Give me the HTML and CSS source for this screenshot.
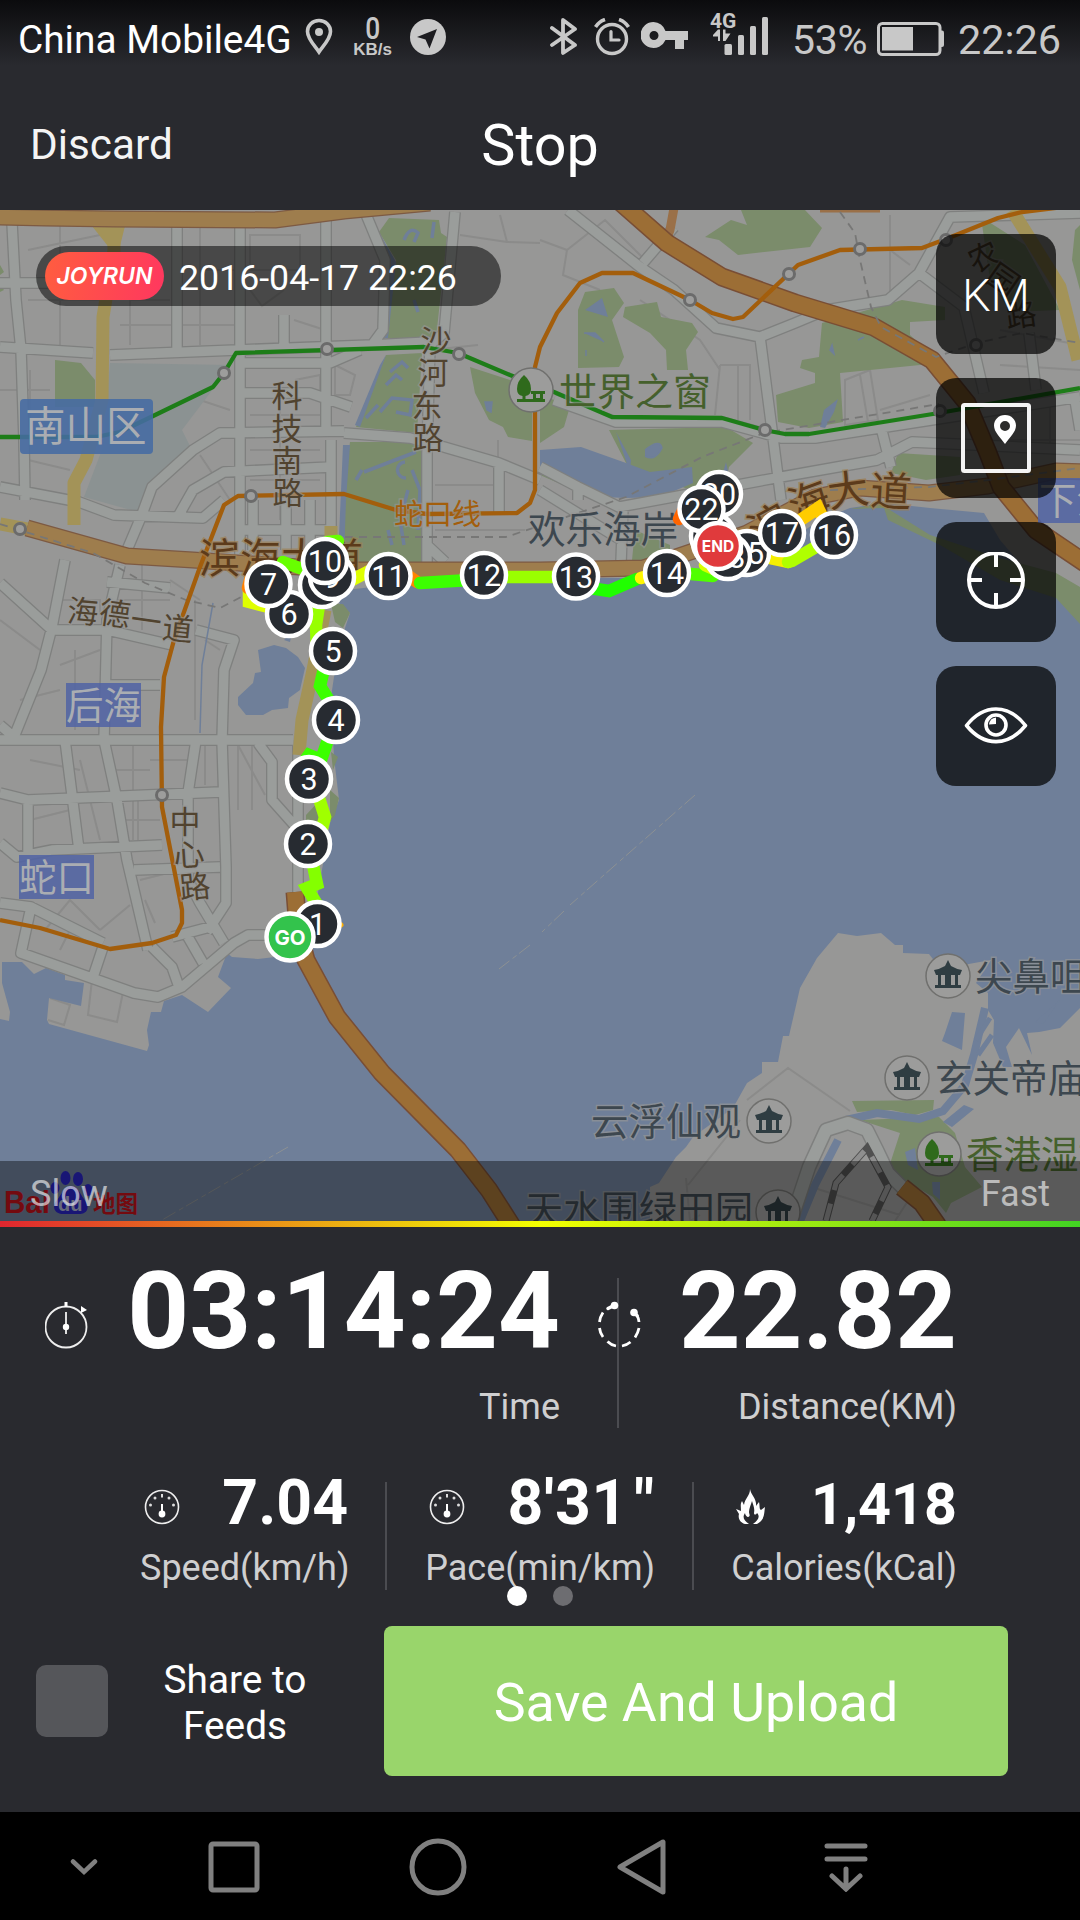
FILE: index.html
```html
<!DOCTYPE html>
<html lang="en">
<head>
<meta charset="utf-8">
<title>Joyrun</title>
<link rel="stylesheet" href="styles.css">
</head>
<body>
<div class="screen">
  <div class="statusbar">
    <span class="carrier">China Mobile4G</span>
    <svg class="st-pin" width="28" height="38" viewBox="0 0 28 38"><path d="M14 2.5C7.400 2.500 2.500 7.500 2.500 13.500C2.500 21 10 28 14 34C18 28 25.500 21 25.500 13.500C25.500 7.500 20.600 2.500 14 2.500Z" fill="none" stroke="#c8c8c8" stroke-width="3.600"/><circle cx="14" cy="14" r="4" fill="#c8c8c8"/></svg>
    <span class="netspeed"><b>0</b><i>KB/s</i></span>
    <svg class="st-nav" width="36" height="36" viewBox="0 0 36 36"><circle cx="18" cy="18" r="18" fill="#c8c8c8"/><path d="M27 10L7 18L15.500 20.500L19.500 29.500Z" fill="#1c1c20"/></svg>
    <span class="grow"></span>
    <svg class="st-bt" width="28" height="40" viewBox="0 0 28 40"><path d="M2 11L25 28L13 36V3L25 12L2 28" fill="none" stroke="#c8c8c8" stroke-width="3.800" stroke-linejoin="round" stroke-linecap="round"/></svg>
    <svg class="st-alarm" width="36" height="38" viewBox="0 0 36 38"><g fill="none" stroke="#c8c8c8"><circle cx="18" cy="21" r="14.500" stroke-width="3.400"/><path d="M17 13.500V22H25" stroke-width="3.200" stroke-linecap="round"/><path d="M1.500 9Q5 3.500 11 1.500M34.500 9Q31 3.500 25 1.500" stroke-width="3.600"/></g></svg>
    <svg class="st-key" width="48" height="28" viewBox="0 0 48 28"><path fill-rule="evenodd" fill="#c8c8c8" d="M12.500 0a13 13 0 1 0 12 18H34V27H43V18H47V9H24.500A13 13 0 0 0 12.500 0ZM13 9a4.500 4.500 0 1 1 0 9a4.500 4.500 0 0 1 0-9Z"/></svg>
    <svg class="st-signal" width="60" height="46" viewBox="0 0 60 46"><text x="0" y="16.500" class="sig-label">4G</text><g fill="#c8c8c8"><rect x="14.500" y="33" width="7.500" height="11" rx="1.500"/><rect x="28" y="24" width="6" height="20" rx="1.500"/><rect x="40" y="15" width="6" height="29" rx="1.500"/><rect x="52" y="6" width="6" height="38" rx="1.500"/><path d="M3 24L8 18.500H10V30H8V25.500H3ZM13 18.500H15.500V22.500H20.500L15.500 30H13Z"/></g></svg>
    <span class="battery-pct">53%</span>
    <svg class="st-batt" width="68" height="34" viewBox="0 0 68 34"><rect x="1.500" y="1.500" width="61.500" height="31" rx="4" fill="none" stroke="#c8c8c8" stroke-width="3"/><rect x="5" y="5" width="31" height="23.500" fill="#c8c8c8"/><path d="M64 8.500h1a2 2 0 0 1 2 2v12.500a2 2 0 0 1-2 2h-1z" fill="#c8c8c8"/></svg>
    <span class="clock">22:26</span>
  </div>
  <header class="titlebar">
    <span class="discard">Discard</span>
    <h1>Stop</h1>
  </header>

  <main class="map">
    <svg class="map-canvas" viewBox="0 210 1080 1011" width="1080" height="1011">
      <defs>
        <path id="roads" d="M12 223L16 300L21 350L24 440L25 500M0 347L93 353M110 355L237 350L372 345L430 342M0 283H103M177 225V350M240 225V560M284 315V350M326 220V435M365 212L385 260L383 330L372 345M455 212L444 333L430 345L427 453V562M344 433L410 438L444 447L499 463L540 480M127 550L141 517L152 487L193 450L220 433L344 431M176 520L193 490L224 472L331 467M0 487L79 502L114 515L203 518L224 500M241 393H310L351 407M241 363H330L360 350M241 530H331M253 500V550M286 500V550M310 500V550M331 440V530M499 463V512M427 545L445 562M0 740H293M0 725L14 737L41 670L52 627L65 560M0 583L52 630H107L172 645M196 630L234 640L224 670L222 740L226 867V903L207 932M120 565L107 620L104 740L117 800L127 860L148 950M107 582L170 588M107 685H160M65 740L79 850M0 793L28 800L220 792M28 800V853M0 843L17 857L52 850L162 845M196 740L188 793V880L200 903L224 943M134 870L220 867M0 903L31 907L21 953L134 993L158 997L182 987L234 943L248 935H285M31 907L103 943M103 947L93 977M152 947L172 967L179 987M188 937L203 963M172 937L210 927M258 743L272 762V800L296 827M298 740V893M568 210L640 267L674 290L716 328L760 337L795 323L826 310L888 300L919 273L950 217L1080 213M643 263L674 227M760 337L772 430L781 500M554 400L616 422H722L781 438H815L1080 397M540 467L578 487L619 507L781 477L877 460L912 442L1080 450M881 427L891 467M919 273L964 307L984 393M1029 333L1036 390M623 507L621 563M578 487V500M540 490L621 540M1075 400L1080 430"/>
        <g id="temple"><circle r="22" fill="#9c9c9b" stroke="#70706e" stroke-width="1.500"/><path fill="#2f3d42" d="M0-16L3-10Q8-7 14-6L12-1H-12L-14-6Q-8-7-3-10ZM-10-1H-7V9H-3V-1H3V9H7V-1H10V9H13V12H-13V9H-10Z"/></g>
        <g id="park"><circle r="22" fill="#9c9c9b" stroke="#70706e" stroke-width="1.500"/><path fill="#2f6a1c" d="M-7-15Q0-9 0-1Q0 5-5.500 6V9H2V4H0V1H14V4H12V9H14V12H-14V9H-8.500V6Q-14 5-14-1Q-14-9-7-15ZM5 4V8H9V4Z"/></g>
      </defs>
      <rect y="210" width="1080" height="1011" fill="#979796"/>
      <g class="lots"><path d="M28 250L100 235M60 225V345M28 300H100M130 300H170M120 325H235M130 300V345M200 225V345M200 270H235M250 235H300V270H250ZM250 290L262 306L284 290M294 320L325 330M250 365L280 360M295 380L320 375V395M335 365L355 375L350 395H335V365M0 390H50M30 370V430M28 460L70 470M120 465L140 450M200 400L230 410M250 415H320M280 400V520M250 450H320M250 480H320M200 455L230 500M435 485H500M430 350L478 345M460 235L507 242L540 243M507 242L500 215M435 530H525M498 440V470M540 240L567 250L563 275L600 290M567 250L605 220L645 260M890 215V300M850 250H890L910 265M720 365H750V420M720 365L715 415M738 365V420M845 380L870 370L878 420L845 425ZM860 375L868 422M880 410L930 395M640 300L700 340L720 370M1000 330L1080 345M1000 365L1080 370M1000 440H1080M1050 400V450M0 620L40 650M60 600H100V615M60 665L100 650M75 650V730M20 700L60 690M30 760L80 770M115 770H150M133 745V840M80 760L100 840M150 760H188M205 745V785M238 745V810M252 745V810M238 745L265 795M30 820L70 810M120 820H160M138 800V845M40 870L75 860M45 930L70 900L100 930M70 930L60 950M100 930L130 905M140 880L180 870M145 900L155 923M92 980L88 1015L117 1022L123 992M170 580L200 600M195 600V720M205 640L220 650M110 600H170M142 560V630M50 998L70 1005L64 1025L48 1020M747 1100L788 1068L850 1111M688 1185L740 1120M686 1178L690 1221L700 1215M805 1185L900 1215M895 1221L915 1190"/></g>
      <path fill="#8b9292" d="M110 363L231 365L207 397L182 430L192 450L152 487L138 512L84 497L103 447Z"/>
      <g fill="#7b8c6b">
        <path d="M389 218L439 220L441 233L447 237L436 338H387L396 260L379 232ZM386 355L422 353L417 433L356 427ZM350 442H424L422 562H342L345 480ZM55 360L81 363L95 380V407H55ZM470 367L510 380L532 413V441L508 437L503 427L489 420L475 393ZM0 265L4 272L0 275ZM0 285L4 290L0 292Z"/>
        <path d="M705 237L731 220L747 225L741 210H805L822 228L810 247L738 255L719 240ZM585 292L614 288L624 303L612 320L624 357L619 367L578 368V310ZM625 307L657 302L661 317L692 323L698 332L686 350L688 370H667L666 350L650 333L623 317ZM822 323L902 300L945 307V320L910 322V335L940 363L840 373L843 422L809 428L778 422L776 395L815 383V373L800 368L802 360L819 357ZM609 430L726 427L753 443L729 467L726 483L690 490L640 470L626 463ZM540 397L571 403L564 427L540 443ZM898 453L960 457V475L926 480L891 473ZM981 217L1025 245L1060 310L1010 312L990 280ZM1075 230L1080 225V290L1072 260ZM540 465L575 482L610 495L590 497L540 475ZM635 530L670 545V560H632Z"/>
        <path d="M852 1101L934 1100L933 1110L915 1115L891 1110L857 1112ZM860 1120L939 1117L955 1133L965 1167L982 1187L951 1203L946 1213L933 1197L888 1170L900 1133Z"/>
      </g>
      <path fill="#6f7f99" d="M410 583L540 578H690L720 568L760 560L790 540L820 520L850 508L884 503L930 508L984 513L1000 540L1030 575L1056 597L1080 603V1008L1060 1028L1039 1032L1027 1033L1032 1055L1019 1028L1006 1047L1012 1067H1003L993 1043L994 1020L988 1010V993L976 983L991 960L963 965L936 963L929 954L903 953V945H895L881 933L857 936L838 933L817 958L800 988L789 1036H783L778 1062H762V1073L747 1083L733 1108L693 1137L686 1147L676 1157L659 1183L650 1187V1221H0V1019L9 1021L10 1012L2 983V962H22L34 974L46 968L65 975V980L84 983L81 1006L49 998L47 1020L49 1024L147 1051L149 1045L147 1030L151 1012H161L164 1001L182 995L208 1012L231 988L218 977L227 953L232 957L258 959L275 957L310 955L318 893L330 823L339 800L334 757L331 697L334 677L345 628L350 613L339 603L345 590Z"/>
      <g fill="#6f7f99">
        <path d="M258 650L274 645L286 648L298 657L305 668L300 690L289 698L288 708L272 710L263 715H246L238 705V697L253 683L255 673L261 672ZM284 640L292 632L290 642ZM540 450L581 447L626 463L650 472L692 467L693 483L660 497L626 498L602 497L540 468ZM585 310L602 298L608 317ZM820 427L824 410L838 399L834 412L825 428ZM616 432L631 460L630 473L624 455ZM343 445H350L346 500L344 560H338ZM386 355L360 427L355 425L380 365ZM379 232L396 262L388 338H384L390 262ZM720 483L726 462L730 480L722 490ZM945 1033L952 1012L965 1013L962 1050L942 1041ZM943 1122L964 1105L974 1109L952 1127ZM905 1152L915 1148L918 1170L908 1165ZM1060 1000L1035 1022L1043 1024ZM932 1182H940V1200L933 1194Z"/>
        <path d="M404 240Q410 225 418 233L414 242M434 222L432 238M414 300L418 312M386 385L396 375L402 380M390 372L402 362L408 368M380 412L392 398L412 400L410 415L396 412M366 418L378 405M364 472L395 460L416 452M405 462A8 8 0 1 0 406 478M408 490L400 520L404 545M412 470L420 490L418 530M356 480L362 470M388 530L392 545" fill="none" stroke="#6f7f99" stroke-width="3.500"/>
        <path d="M485 402L492 402L491 412L487 410ZM830 350L832 345L834 354ZM858 340L864 337ZM584 333H595L604 342M586 350V356M645 450Q660 438 662 448Q655 462 645 456" stroke="#6f7f99" stroke-width="1.500"/>
      </g>
      <path d="M846 1120L877 1113L919 1119L943 1111L965 1085L974 1055L985 1008M800 1221L815 1185L838 1140" fill="none" stroke="#6f7f99" stroke-width="8"/>
      <path d="M978 1055L992 1035M976 1040L990 1018" fill="none" stroke="#6f7f99" stroke-width="5"/>
      <path fill="#7b8c6b" d="M850 509L884 503L890 510L930 535L1000 558L1056 573L1080 587V624L1056 598L1000 580L940 545L888 520L884 508ZM331 604L343 604L350 613L343 628L335 622ZM331 752L338 757L333 770ZM330 790L339 798L335 815L330 822ZM306 815L320 800V828H306Z"/>
      <use href="#roads" class="road-edge"/><use href="#roads" class="road-face"/>
      <path class="road-edge wide" d="M791 1221L809 1167L826 1130L848 1123L867 1130L877 1150L888 1173L908 1193"/><path class="road-face wide2" d="M791 1221L809 1167L826 1130L848 1123L867 1130L877 1150L888 1173L908 1193"/>
      <path d="M826 1221L836 1183L867 1148L888 1187L872 1221" fill="none" stroke="#505050" stroke-width="7"/><path d="M826 1221L836 1183L867 1148L888 1187L872 1221" fill="none" stroke="#8e8e8e" stroke-width="5" stroke-dasharray="18 14"/>
      <path d="M213 603L202 665L200 733" fill="none" stroke="#6f7f99" stroke-width="1.500"/>
      <g fill="none" stroke-linejoin="round">
        <path d="M114 228V250L103 317L102 400L86 460L74 483V525" stroke="#a39358" stroke-width="13"/>
        <path d="M92 226H125L119 250H111Z" fill="#a39358"/>
        <path d="M325 610L313 670L302 720L299 755M331 526V550M1012 210L1060 287L1078 360M0 524L27 529" stroke="#a39358" stroke-width="13"/>
        <path d="M-5 217L45 218L114 219L275 220L344 211L430 203M27 528L127 556L193 560L344 570H540L643 568L747 533L815 497L860 488L929 493L988 486L1056 471L1085 472" stroke="#7d5a43" stroke-width="17"/>
        <path d="M-5 217L45 218L114 219L275 220L344 211L430 203M27 528L127 556L193 560L344 570H540L643 568L747 533L815 497L860 488L929 493L988 486L1056 471L1085 472" stroke="#9e7d4d" stroke-width="14.500"/>
        <path d="M674 208L670 230L664 245M820 208H880" stroke="#9a7048" stroke-width="9"/>
        <path d="M618 200L667 243L722 277L795 303L874 327L932 360L967 403L988 453L1001 487L1036 530L1085 563M295 892L298 930L306 960L337 1017L382 1073L458 1150L489 1190L512 1226M902 1187L922 1203L938 1226" stroke="#794e35" stroke-width="19"/>
        <path d="M618 200L667 243L722 277L795 303L874 327L932 360L967 403L988 453L1001 487L1036 530L1085 563M295 892L298 930L306 960L337 1017L382 1073L458 1150L489 1190L512 1226M902 1187L922 1203L938 1226" stroke="#9c6e35" stroke-width="16"/>
        <path d="M840 212L855 233L860 260L871 307L881 327L936 357L977 343L1022 333L1080 343M331 537H506L626 497L702 457L764 433L939 404M0 524L93 553L145 583L186 600L220 608L241 597M830 490L929 487L988 480L1080 468" stroke="#777776" stroke-width="1.800" stroke-dasharray="8 6"/>
        <path d="M695 795L621 860L570 905M564 911L542 932M530 945L499 969M288 1147L162 1220" stroke="#8d9193" stroke-width="1" stroke-dasharray="14 3 5 4"/>
        <path d="M0 437H96L120 432L213 387L224 373L236 353L424 347L458 353L510 375L554 392L612 417L722 418L764 430L785 434H809L939 413L1080 388" stroke="#1d7d18" stroke-width="4.300"/>
        <path d="M0 920L40 928L110 949L152 943L176 935L182 923V910L162 807L161 727L164 677L174 640L200 567L224 505L238 496L344 494L396 510L427 514L517 513L530 503L535 490V367L540 347L557 313L580 283L602 273H633L690 300L712 313L733 319L743 317L798 265L840 250L922 248L946 239L998 218L1022 212L1080 205" stroke="#a35e0c" stroke-width="4.300"/>
      </g>
      <g class="station"><circle cx="224" cy="373" r="5.500"/><circle cx="327" cy="349" r="5.500"/><circle cx="459" cy="354" r="5.500"/><circle cx="251" cy="496" r="5.500"/><circle cx="20" cy="529" r="5.500"/><circle cx="162" cy="795" r="5.500"/><circle cx="690" cy="300" r="5.500"/><circle cx="789" cy="274" r="5.500"/><circle cx="860" cy="249" r="5.500"/><circle cx="946" cy="240" r="5.500"/><circle cx="765" cy="430" r="5.500"/><circle cx="976" cy="345" r="5.500"/><circle cx="940" cy="411" r="5.500"/></g>

      <rect x="20" y="399" width="133" height="55" rx="4" fill="#456ba3" fill-opacity=".88"/>
      <text class="area" x="25" y="441" font-size="40.500">南山区</text>
      <g fill="#5063a5" fill-opacity=".85"><rect x="66" y="683" width="75" height="44"/><rect x="19" y="855" width="75" height="44"/><rect x="1038" y="478" width="42" height="45"/></g>
      <g class="area" font-size="37.500"><text x="66" y="719">后海</text><text x="19" y="891">蛇口</text><text x="1039" y="514">下沙</text></g>
      <g class="street" font-size="31">
        <text x="287" y="407">科</text><text x="287" y="440">技</text><text x="287" y="472">南</text><text x="288" y="504">路</text>
        <text x="436" y="352">沙</text><text x="433" y="384">河</text><text x="427" y="417">东</text><text x="428" y="449">路</text>
        <text x="83" y="623" transform="rotate(5 83 612)">海</text><text x="115" y="625" transform="rotate(8 115 613)">德</text><text x="146" y="632" transform="rotate(8 146 622)">一</text><text x="178" y="640" transform="rotate(6 178 628)">道</text>
        <text x="185" y="833">中</text><text x="189" y="866" transform="rotate(-4 189 855)">心</text><text x="195" y="898" transform="rotate(-5 195 887)">路</text>
        <text x="984" y="268" transform="rotate(-25 984 257)">农</text><text x="1003" y="291" transform="rotate(35 1003 280)">园</text><text x="1021" y="326" transform="rotate(-8 1021 315)">路</text>
      </g>
      <text class="metro" x="394" y="525" font-size="29">蛇口线</text>
      <g class="avenue" font-size="41"><text x="281" y="573">滨海大道</text>
        <text x="769" y="540" transform="rotate(-28 769 525)">滨</text><text x="809" y="516" transform="rotate(-20 809 501)">海</text><text x="848" y="505" transform="rotate(-8 848 490)">大</text><text x="891" y="506" transform="rotate(3 891 491)">道</text></g>
      <g class="poi" font-size="37.500"><text x="528" y="543">欢乐海岸</text><text x="591" y="1135">云浮仙观</text><text x="935" y="1092">玄关帝庙</text><text x="975" y="990">尖鼻咀</text><text x="525" y="1223" font-size="38">天水围绿田园</text></g>
      <g class="poi green" font-size="38"><text x="559" y="405">世界之窗</text><text x="966" y="1168" font-size="37.500">香港湿地</text></g>
      <use href="#temple" x="769" y="1121"/><use href="#temple" x="907" y="1078"/><use href="#temple" x="948" y="976"/><use href="#temple" x="778" y="1212"/>
      <use href="#park" x="939" y="1154"/><use href="#park" x="531" y="390"/>

      <g class="baidu"><text x="4" y="1213" fill="#c1121a" font-size="31" textLength="46" lengthAdjust="spacingAndGlyphs">Bai</text><text x="93" y="1212" fill="#c1121a" font-size="22.500">地图</text>
        <g fill="#2a26c4"><ellipse cx="65.500" cy="1178" rx="5" ry="7"/><ellipse cx="78" cy="1179" rx="5" ry="7"/><ellipse cx="55" cy="1188" rx="4.500" ry="6"/><ellipse cx="88" cy="1190" rx="4.500" ry="6"/><path d="M71 1186C78 1186 80 1194 84 1199C91 1208 87 1214 79 1214H63C55 1214 51 1207 57 1200C62 1194 64 1186 71 1186Z"/></g><text x="58" y="1211" fill="#b0b4d0" font-size="20">du</text></g>

      <g class="route">
        <path stroke="#ffb000" d="M335 929L341 925" stroke-width="5"/>
        <path stroke="#84ff00" d="M317 915L318 906L307 888L317 884L312 860L309 850"/>
        <path stroke="#a0ff00" d="M322 838L321 832L325 817L318 795L309 785"/>
        <path stroke="#3cff00" d="M304 762L309 755L321 760L333 725M335 710L320 686L326 660"/>
        <path stroke="#98ff00" d="M317 650L316 625L318 612L300 612"/>
        <path stroke="#dfff00" d="M280 610L249 602V590"/><path stroke="#ff8000" d="M248 588L250 580"/>
        <path stroke="#68ff00" d="M283 562L305 570M327 542L338 541"/>
        <path stroke="#dfff00" d="M352 580L375 568"/><path stroke="#ff8400" d="M410 577L417 582"/>
        <path stroke="#3cff00" d="M420 583L470 580"/><path stroke="#9aff00" d="M490 577H570"/>
        <path stroke="#20ff00" d="M590 588L609 591L637 579"/><path stroke="#fff600" d="M641 578L658 573"/>
        <path stroke="#50ff00" d="M680 573L713 576"/><path stroke="#d8ff00" d="M705 565L725 574"/>
        <path stroke="#f5ee00" d="M760 556L788 562"/><path stroke="#b0ff00" d="M788 562L792 561L826 541"/>
        <path stroke="#ffcc00" d="M793 525L818 508L824 520"/><path stroke="#ff6500" d="M679 519L683 511"/>
      </g>
      <g class="marks">
        <g transform="translate(317.500 924)"><circle r="22"/><text y="11">1</text></g><g transform="translate(308 844)"><circle r="22"/><text y="11">2</text></g><g transform="translate(309 779)"><circle r="22"/><text y="11">3</text></g><g transform="translate(336 720)"><circle r="22"/><text y="11">4</text></g><g transform="translate(333 651)"><circle r="22"/><text y="11">5</text></g><g transform="translate(289 614)"><circle r="22"/><text y="11">6</text></g><g transform="translate(268.500 584)"><circle r="22"/><text y="11">7</text></g><g transform="translate(322 585)"><circle r="22"/><text y="11">8</text></g><g transform="translate(332 577)"><circle r="22"/><text y="11">9</text></g><g transform="translate(325 561)"><circle r="22"/><text y="11">10</text></g><g transform="translate(388.500 576)"><circle r="22"/><text y="11">11</text></g><g transform="translate(484 575)"><circle r="22"/><text y="11">12</text></g><g transform="translate(576 576.500)"><circle r="22"/><text y="11">13</text></g><g transform="translate(667 573)"><circle r="22"/><text y="11">14</text></g><g transform="translate(747 553)"><circle r="22"/><text y="11">15</text></g><g transform="translate(834 535)"><circle r="22"/><text y="11">16</text></g><g transform="translate(782 533)"><circle r="22"/><text y="11">17</text></g><g transform="translate(728 557)"><circle r="22"/><text y="11">18</text></g><g transform="translate(715 543)"><circle r="22"/><text y="11">19</text></g><g transform="translate(719 494)"><circle r="22"/><text y="11">20</text></g><g transform="translate(713 536)"><circle r="22"/><text y="11">21</text></g><g transform="translate(701.500 509)"><circle r="22"/><text y="11">22</text></g>
        <g class="end" transform="translate(718 546)"><circle r="23"/><text y="6">END</text></g>
        <g class="go" transform="translate(290 937)"><circle r="23.500"/><text y="8">GO</text></g>
      </g>
    </svg>
    <div class="stamp"><span class="brand">JOYRUN</span><span class="date">2016-04-17 22:26</span></div>
    <div class="tools">
      <button class="tool km">KM</button>
      <button class="tool"><svg width="70" height="70" viewBox="0 0 70 70"><rect x="2" y="2" width="66" height="66" rx="1.500" fill="none" stroke="#f4f4f4" stroke-width="4"/><path fill="#fff" fill-rule="evenodd" d="M44 12C37.500 12 33 17 33 22.500C33 29 39 34 44 41C49 34 55 29 55 22.500C55 17 50.500 12 44 12ZM44 18a5 5 0 1 1 0 10a5 5 0 0 1 0-10Z"/></svg></button>
      <button class="tool"><svg width="60" height="60" viewBox="0 0 60 60" fill="none" stroke="#fff" stroke-width="4"><circle cx="30" cy="28" r="27"/><path d="M30 2V15M30 41V55M2 28H16M44 28H58"/></svg></button>
      <button class="tool"><svg width="64" height="40" viewBox="0 0 64 40" fill="none" stroke="#fff" stroke-width="3.600"><path d="M2.500 19.500C20-2.500 44-2.500 61.500 19.500C44 41 20 41 2.500 19.500Z" stroke-linejoin="round"/><circle cx="32" cy="19" r="10"/><path d="M32 11.500A8 8 0 0 0 25 18.500L32 18Z" fill="#fff" stroke="none"/></svg></button>
    </div>
    <div class="scale"><span>Slow</span><span>Fast</span></div>
  </main>
  <div class="spectrum"></div>

  <section class="stats">
    <div class="row major">
      <div class="metric time">
        <div class="line"><svg width="44" height="48" viewBox="0 0 44 48"><circle cx="21" cy="26" r="20.500" fill="none" stroke="#eee" stroke-width="1.800"/><path d="M19.500 1h3v5h-3z" fill="#fff"/><path d="M36 5L42 9L36 12Z" fill="#fff"/><path d="M21 11V33" stroke="#ddd" stroke-width="2"/><circle cx="21" cy="26" r="3.200" fill="#fff"/></svg><strong>03:14:24</strong></div>
        <span class="label">Time</span>
      </div>
      <div class="rule"></div>
      <div class="metric distance">
        <div class="line"><svg width="44" height="48" viewBox="0 0 44 48" fill="none" stroke="#fff" stroke-width="2.800"><path d="M40 14.500Q42 18 42 21M42 27Q41 32 38 36.500M33.500 41Q30 44 25 45M19 45Q14 44 10.500 40.500M6 36Q3 32 2.500 27M2.500 21Q3 16 6 11.500"/><path d="M11 7.500L16 5M36 11L40 14.500" stroke-width="3.500" stroke-linecap="round"/><circle cx="17.500" cy="4.500" r="3.800" fill="#fff" stroke="none"/><circle cx="37" cy="11.500" r="3.800" fill="#fff" stroke="none"/></svg><strong>22.82</strong></div>
        <span class="label">Distance(KM)</span>
      </div>
    </div>
    <div class="row minor">
      <div class="metric speed">
        <div class="line"><svg width="36" height="36" viewBox="0 0 36 36"><circle cx="18" cy="18" r="16.500" fill="none" stroke="#eee" stroke-width="1.600"/><path d="M18 15V25" stroke="#fff" stroke-width="2"/><circle cx="18" cy="25" r="3.400" fill="#fff"/><g fill="#ddd"><circle cx="6.500" cy="16" r="1.500"/><circle cx="11" cy="9" r="1.500"/><rect x="17" y="5" width="2" height="3.500"/><circle cx="25" cy="9" r="1.500"/><circle cx="29.500" cy="16" r="1.500"/></g></svg><strong>7.04</strong></div>
        <span class="label">Speed(km/h)</span>
      </div>
      <div class="rule"></div>
      <div class="metric pace">
        <div class="line"><svg width="36" height="36" viewBox="0 0 36 36"><circle cx="18" cy="18" r="16.500" fill="none" stroke="#eee" stroke-width="1.600"/><path d="M18 15V25" stroke="#fff" stroke-width="2"/><circle cx="18" cy="25" r="3.400" fill="#fff"/><g fill="#ddd"><circle cx="6.500" cy="16" r="1.500"/><circle cx="11" cy="9" r="1.500"/><rect x="17" y="5" width="2" height="3.500"/><circle cx="25" cy="9" r="1.500"/><circle cx="29.500" cy="16" r="1.500"/></g></svg><strong>8'31<em>"</em></strong></div>
        <span class="label">Pace(min/km)</span>
      </div>
      <div class="rule"></div>
      <div class="metric calories">
        <div class="line"><svg width="30" height="36" viewBox="0 0 30 36"><path fill="#fff" d="M14 0C15 6 21 10 20 17L23 13C24 17 23 20 25 21L29 18C28 24 29 31 21 35H17C23 31 24 27 21 24C20 26 18 26 18 24C19 19 17 16 16 12C15 16 13 19 13 23C13 25 15 27 12 28C11 28 9 26 9 24C6 28 8 32 13 35H9C3 33 2 28 3 25L0 20L5 22C5 18 4 15 6 12L8 16C9 9 14 7 14 0Z"/></svg><strong>1,418</strong></div>
        <span class="label">Calories(kCal)</span>
      </div>
    </div>
    <div class="dots"><i class="on"></i><i></i></div>
    <div class="actions">
      <span class="check"></span>
      <span class="share">Share to<br>Feeds</span>
      <button class="save">Save And Upload</button>
    </div>
  </section>

  <nav class="navbar">
    <span class="hide"><svg width="28" height="20" viewBox="0 0 28 20"><path d="M3 4.500L14 15L25 4.500" fill="none" stroke="#808080" stroke-width="4.500" stroke-linecap="round"/></svg></span>
    <span><svg width="52" height="52" viewBox="0 0 52 52"><rect x="3" y="3" width="46" height="46" rx="2" fill="none" stroke="#808080" stroke-width="5"/></svg></span>
    <span><svg width="58" height="58" viewBox="0 0 58 58"><circle cx="29" cy="29" r="26" fill="none" stroke="#808080" stroke-width="5"/></svg></span>
    <span><svg width="50" height="56" viewBox="0 0 50 56"><path d="M46 3V53L3 28Z" fill="none" stroke="#808080" stroke-width="5" stroke-linejoin="round"/></svg></span>
    <span><svg width="44" height="50" viewBox="0 0 44 50" fill="none" stroke="#808080" stroke-width="5" stroke-linecap="round"><path d="M3 4H41M3 17H41M22 27V46M8 34L22 47L36 34"/></svg></span>
  </nav>
</div>
</body>
</html>
```
FILE: styles.css
```css
* { box-sizing: border-box; }
body { margin: 0; background: #292a2f; color: #fff; font-family: Roboto, "Noto Sans CJK SC", sans-serif; }
button { border: 0; padding: 0; color: #fff; font-family: inherit; }
svg { display: block; flex: none; }
.screen { width: 1080px; height: 1920px; display: flex; flex-direction: column; overflow: hidden; }

.statusbar { height: 72px; padding: 0 19px 0 18px; display: flex; align-items: center; background: linear-gradient(#0b0b0d, #292a2f 66px); white-space: nowrap; }
.grow { flex: 1; }
.carrier { font-size: 38.8px; padding-top: 7px; }
.st-pin { margin-left: 13px; margin-top: 2px; }
.netspeed { width: 38px; margin-left: 21px; display: flex; flex-direction: column; align-items: center; color: #c8c8c8; }
.netspeed b { font-size: 31px; line-height: 26px; font-weight: 500; transform: scaleX(.85); }
.netspeed i { font: bold 17px/15px "Liberation Sans", sans-serif; }
.st-nav { margin-left: 18px; margin-top: 2px; }
.st-bt { margin-top: 2px; }
.st-alarm { margin-left: 16px; margin-top: 1px; }
.st-key { margin-left: 11px; margin-top: -1px; }
.st-signal { margin-left: 21px; margin-top: -4px; overflow: visible; }
.sig-label { font: bold 21px Roboto, sans-serif; fill: #c8c8c8; }
.battery-pct { width: 85px; margin-left: 22px; padding-top: 7px; font-size: 41px; letter-spacing: -.3px; color: #c8c8c8; }
.st-batt { margin-top: 5px; }
.clock { margin-left: 13px; padding-top: 7px; font-size: 41.4px; color: #c8c8c8; }

.titlebar { height: 138px; display: grid; grid-template-columns: 1fr auto 1fr; align-items: center; padding: 6px 30px 0; }
.discard { font-size: 42.3px; color: #f4f4f4; }
.titlebar h1 { margin: 2px 0 0; font-size: 57.5px; font-weight: 400; }

.map { position: relative; height: 1011px; overflow: hidden; }
.lots { fill: none; stroke: #8b8b8a; stroke-width: 2; }
.road-edge, .road-face { fill: none; stroke-linejoin: round; }
.road-edge { stroke: #7f807f; stroke-width: 12; }
.road-face { stroke: #9a9d9b; stroke-width: 9.4px; }
.road-edge.wide { stroke-width: 15; }
.road-face.wide2 { stroke-width: 12; }
.station circle { fill: #9d9d9c; stroke: #6b6b6b; stroke-width: 3; }
.area { fill: #aaadb2; }
.street, .metro, .avenue, .poi { paint-order: stroke; stroke: #979796; stroke-width: 3px; stroke-opacity: .65; }
.street { fill: #51432f; text-anchor: middle; }
.metro { fill: #a35e0c; }
.avenue { fill: #5c3b1b; text-anchor: middle; stroke: #9e7d4d; }
.poi { fill: #3d474f; }
.poi.green { fill: #45602c; }
.baidu { font-family: "Liberation Sans", "Noto Sans CJK SC", sans-serif; font-weight: bold; }
.route { fill: none; stroke-width: 12.5px; stroke-linejoin: miter; stroke-linecap: round; }
.marks circle { fill: #272b31; stroke: #fff; stroke-width: 4.5px; }
.marks text { fill: #fff; font-size: 30.5px; text-anchor: middle; }
.marks .end circle { fill: #e03a3c; }
.marks .end text { font: bold 15.5px Inter, sans-serif; }
.marks .go circle { fill: #33c34c; }
.marks .go text { font: bold 20.5px Inter, sans-serif; }

.stamp { position: absolute; left: 36px; top: 36px; width: 465px; height: 60px; padding-left: 9px; border-radius: 30px; background: rgba(0, 0, 0, .52); display: flex; align-items: center; gap: 15px; }
.brand { width: 119px; height: 48px; border-radius: 24px; background: linear-gradient(100deg, #ff5d3f, #ff375f); display: flex; align-items: center; justify-content: center; font: italic 600 23px Inter, sans-serif; }
.date { font-size: 35.7px; padding-top: 3px; }
.tools { position: absolute; right: 24px; top: 24px; display: flex; flex-direction: column; gap: 24px; }
.tool { width: 120px; height: 120px; border-radius: 20px; background: rgba(0, 0, 0, .71); display: flex; align-items: center; justify-content: center; }
.km { font-size: 45px; font-weight: 300; padding-top: 2px; }
.scale { position: absolute; left: 0; right: 0; bottom: 0; height: 60px; padding: 5px 30px 0; display: flex; justify-content: space-between; align-items: center; background: rgba(0, 0, 0, .4); font-size: 36px; color: rgba(255, 255, 255, .6); }
.spectrum { height: 6px; background: linear-gradient(90deg, #e0262f, #f3ff00 50%, #42d323); }

.stats { height: 585px; display: flex; flex-direction: column; }
.row { display: flex; }
.major { height: 255px; padding: 51px 0 54px 45px; }
.minor { height: 108px; padding-left: 140px; }
.rule { background: #4b4c51; }
.major .rule { width: 2px; margin-left: 57px; }
.minor .rule { width: 2px; }
.metric { display: flex; flex-direction: column; }
.line { display: flex; justify-content: space-between; align-items: center; }
.line strong { font-weight: 700; white-space: nowrap; }
.label { font-size: 36px; line-height: 42px; text-align: right; color: #cfcfd0; white-space: nowrap; }
.major .line { height: 64px; }
.major strong { font-size: 108px; line-height: 64px; padding-top: 2px; }
.major .line svg { margin-top: 30px; }
.major .label { margin-top: 44px; }
.time { width: 515px; }
.distance { width: 360px; margin-left: -22px; position: relative; }
.distance strong { font-size: 107.5px; }
.minor strong { font-size: 62.5px; line-height: 42px; }
.minor .line { height: 42px; }
.minor .line svg { margin-top: 8px; }
.minor .label { margin-top: 23px; }
.speed { width: 207px; margin-right: 38px; }
.speed .line, .pace .line { padding-left: 4px; }
.speed strong { margin-right: -1px; }
.pace { width: 230px; margin: 0 37px 0 38px; }
.pace strong { letter-spacing: .8px; }
.pace em { padding-left: 6px; font-style: normal; }
.calories { width: 226px; margin-left: 37px; margin-right: 1px; }
.calories .line { padding-left: 5px; }
.calories strong { font-size: 57.5px; padding-top: 3px; }
.dots { height: 20px; margin-top: -4px; padding-left: 507px; display: flex; gap: 26px; position: relative; }
.dots i { width: 20px; height: 20px; border-radius: 50%; background: #6d6d71; }
.dots .on { background: #fff; }
.actions { display: flex; align-items: center; height: 150px; margin-top: 20px; padding-left: 36px; }
.check { width: 72px; height: 72px; border-radius: 10px; background: #55565a; }
.share { width: 254px; margin-right: 22px; padding-top: 4px; text-align: center; font-size: 38.8px; line-height: 46px; }
.save { width: 624px; height: 150px; padding-top: 3px; border-radius: 8px; background: #99d56b; font-size: 53.7px; }

.navbar { height: 108px; padding: 2px 0 0 36px; background: #000; display: flex; }
.navbar span { width: 204px; display: flex; align-items: center; justify-content: center; }
.navbar .hide { width: 96px; }
```
